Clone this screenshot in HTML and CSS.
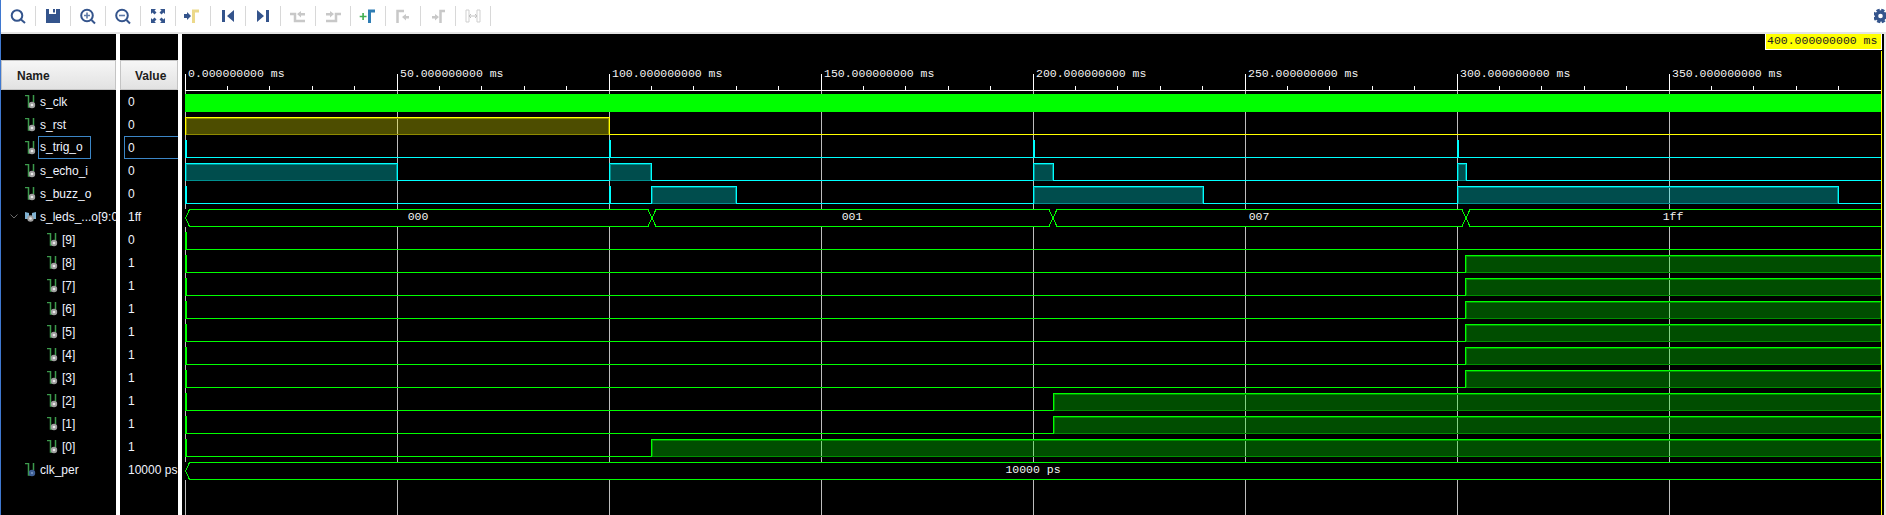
FILE: index.html
```html
<!DOCTYPE html>
<html lang="en">
<head>
<meta charset="utf-8">
<title>Waveform viewer</title>
<link rel="stylesheet" href="styles.css">
</head>
<body>
<svg class="defs" aria-hidden="true">
  <symbol id="sig" viewBox="0 0 11 14">
    <path class="sig-line" d="M0 .5H3.5V12H6M8.5 0V7"/>
    <circle class="sig-dot" cx="7" cy="10" r="3.2"/>
    <circle class="sig-core" cx="7" cy="10" r="1.3"/>
  </symbol>
  <symbol id="sig-param" viewBox="0 0 11 14">
    <path class="sig-line" d="M0 .5H3.5V12H6M8.5 0V7"/>
    <circle class="param-dot" cx="7" cy="10" r="3.2"/>
    <circle class="param-core" cx="7" cy="10" r="1"/>
  </symbol>
  <symbol id="sig-bus" viewBox="0 0 11 14">
    <path class="bus-shape" d="M0 2 4 3V9H0ZM11 2 7 3V9H11Z"/>
    <circle class="sig-dot" cx="5.5" cy="8.5" r="3.2"/>
    <circle class="sig-core" cx="5.5" cy="8.5" r="1.3"/>
  </symbol>
</svg>
<div class="app">
  <div class="toolbar">
    <div class="tool"><svg class="ico" viewBox="0 0 20 20"><circle class="s-blue" cx="9" cy="9.5" r="5.3"/><path class="s-blue" d="M13 13.5 17 17"/></svg></div>
    <div class="tool"><svg class="ico" viewBox="0 0 20 20"><path class="f-blue" d="M3 3H17V17H3Z"/><path class="f-white" d="M6 3H13V8H6Z"/><path class="f-blue" d="M10 3H12V6.500H10Z"/></svg></div>
    <div class="tool"><svg class="ico" viewBox="0 0 20 20"><circle class="s-blue" cx="9" cy="9.500" r="5.800"/><path class="s-blue" d="M13.500 14 17 17.500"/><path class="s-thin" d="M9 6.500V12.500M6 9.500H12"/></svg></div>
    <div class="tool"><svg class="ico" viewBox="0 0 20 20"><circle class="s-blue" cx="9" cy="9.500" r="5.800"/><path class="s-blue" d="M13.500 14 17 17.500"/><path class="s-thin" d="M6 9.500H12"/></svg></div>
    <div class="tool"><svg class="ico" viewBox="0 0 20 20"><path class="f-blue" d="M3 3H8L6.500 4.500 8.500 6.500 6.500 8.500 4.500 6.500 3 8ZM17 3V8L15.500 6.500 13.500 8.500 11.500 6.500 13.500 4.500 12 3ZM3 17V12L4.500 13.500 6.500 11.500 8.500 13.500 6.500 15.500 8 17ZM17 17H12L13.500 15.500 11.500 13.500 13.500 11.500 15.500 13.500 17 12Z"/></svg></div>
    <div class="tool"><svg class="ico" viewBox="0 0 20 20"><path class="f-blue" d="M1 8H4V6L8 10 4 14V12H1Z"/><path class="s-pale" d="M10.500 17V5H16"/></svg></div>
    <div class="tool"><svg class="ico" viewBox="0 0 20 20"><path class="f-blue" d="M4 4H7V16H4ZM16 4V16L9 10Z"/></svg></div>
    <div class="tool"><svg class="ico" viewBox="0 0 20 20"><path class="f-blue" d="M13 4H16V16H13ZM4 4V16L11 10Z"/></svg></div>
    <div class="tool"><svg class="ico" viewBox="0 0 20 20"><path class="s-off" d="M2 8H7V15H17"/><path class="f-off" d="M9 8 13 5V7H17V9.500H13V11.500Z"/></svg></div>
    <div class="tool"><svg class="ico" viewBox="0 0 20 20"><path class="s-off" d="M3 15H13V8H18"/><path class="f-off" d="M11 8 7 5V7H3V9.500H7V11.500Z"/></svg></div>
    <div class="tool"><svg class="ico" viewBox="0 0 20 20"><path class="f-green" d="M4.300 7H5.900V9.700H8.500V11.300H5.900V14H4.300V11.300H1.700V9.700H4.300Z"/><path class="s-marker" d="M11.500 17V5H17"/></svg></div>
    <div class="tool"><svg class="ico" viewBox="0 0 20 20"><path class="s-off" d="M4.500 17V5H11"/><path class="f-off" d="M9 11 13 8V10H16V12.500H13V14.500Z"/></svg></div>
    <div class="tool"><svg class="ico" viewBox="0 0 20 20"><path class="f-off" d="M11 11 7 8V10H4V12.500H7V14.500Z"/><path class="s-off" d="M12.500 17V5H17"/></svg></div>
    <div class="tool"><svg class="ico" viewBox="0 0 20 20"><path class="f-off-light" d="M3 4H6V16H3ZM14 4H17V16H14Z"/><path class="s-off-thin" d="M6 10H14M8 8 6 10 8 12M12 8 14 10 12 12"/></svg></div>
    <div class="gear"><svg class="gear-ico" viewBox="0 0 12 16"><circle class="gear-ring" cx="6.500" cy="8" r="4"/><circle class="gear-teeth" cx="6.500" cy="8" r="6.200"/></svg></div>
  </div>

  <div class="panes">
    <div class="col col-name">
      <div class="head head-name">Name</div>
      <div class="row"><svg class="sig"><use href="#sig"/></svg><span>s_clk</span></div>
      <div class="row"><svg class="sig"><use href="#sig"/></svg><span>s_rst</span></div>
      <div class="row"><svg class="sig"><use href="#sig"/></svg><span class="picked">s_trig_o</span></div>
      <div class="row"><svg class="sig"><use href="#sig"/></svg><span>s_echo_i</span></div>
      <div class="row"><svg class="sig"><use href="#sig"/></svg><span>s_buzz_o</span></div>
      <div class="row row-bus"><svg class="caret" viewBox="0 0 8 5"><path d="M.5 .5 4 4 7.500 .5"/></svg><svg class="sig"><use href="#sig-bus"/></svg><span>s_leds_...o[9:0]</span></div>
      <div class="row row-bit"><svg class="sig"><use href="#sig"/></svg><span>[9]</span></div>
      <div class="row row-bit"><svg class="sig"><use href="#sig"/></svg><span>[8]</span></div>
      <div class="row row-bit"><svg class="sig"><use href="#sig"/></svg><span>[7]</span></div>
      <div class="row row-bit"><svg class="sig"><use href="#sig"/></svg><span>[6]</span></div>
      <div class="row row-bit"><svg class="sig"><use href="#sig"/></svg><span>[5]</span></div>
      <div class="row row-bit"><svg class="sig"><use href="#sig"/></svg><span>[4]</span></div>
      <div class="row row-bit"><svg class="sig"><use href="#sig"/></svg><span>[3]</span></div>
      <div class="row row-bit"><svg class="sig"><use href="#sig"/></svg><span>[2]</span></div>
      <div class="row row-bit"><svg class="sig"><use href="#sig"/></svg><span>[1]</span></div>
      <div class="row row-bit"><svg class="sig"><use href="#sig"/></svg><span>[0]</span></div>
      <div class="row"><svg class="sig"><use href="#sig-param"/></svg><span>clk_per</span></div>
    </div>
    <div class="split"></div>
    <div class="col col-value">
      <div class="head head-value">Value</div>
      <div class="val">0</div>
      <div class="val">0</div>
      <div class="val val-picked">0</div>
      <div class="val">0</div>
      <div class="val">0</div>
      <div class="val">1ff</div>
      <div class="val">0</div>
      <div class="val">1</div>
      <div class="val">1</div>
      <div class="val">1</div>
      <div class="val">1</div>
      <div class="val">1</div>
      <div class="val">1</div>
      <div class="val">1</div>
      <div class="val">1</div>
      <div class="val">1</div>
      <div class="val">10000 ps</div>
    </div>
    <div class="split"></div>
    <svg class="wave" viewBox="182 34 1702 481">
      <path class="grid" d="M185.500 75V515M397.500 75V515M609.500 75V515M821.500 75V515M1033.500 75V515M1245.500 75V515M1457.500 75V515M1669.500 75V515"/>
      <path class="ruler" d="M185 90.500H1881M185.500 74V90M397.500 74V90M609.500 74V90M821.500 74V90M1033.500 74V90M1245.500 74V90M1457.500 74V90M1669.500 74V90"/>
      <path class="ruler" d="M227.500 86V90M269.500 86V90M312.500 86V90M354.500 86V90M439.500 86V90M481.500 86V90M524.500 86V90M566.500 86V90M651.500 86V90M693.500 86V90M736.500 86V90M778.500 86V90M863.500 86V90M905.500 86V90M948.500 86V90M990.500 86V90M1075.500 86V90M1117.500 86V90M1160.500 86V90M1202.500 86V90M1287.500 86V90M1329.500 86V90M1372.500 86V90M1414.500 86V90M1499.500 86V90M1541.500 86V90M1584.500 86V90M1626.500 86V90M1711.500 86V90M1753.500 86V90M1796.500 86V90M1838.500 86V90"/>
      <text class="tick" x="188" y="77">0.000000000 ms</text>
      <text class="tick" x="400" y="77">50.000000000 ms</text>
      <text class="tick" x="612" y="77">100.000000000 ms</text>
      <text class="tick" x="824" y="77">150.000000000 ms</text>
      <text class="tick" x="1036" y="77">200.000000000 ms</text>
      <text class="tick" x="1248" y="77">250.000000000 ms</text>
      <text class="tick" x="1460" y="77">300.000000000 ms</text>
      <text class="tick" x="1672" y="77">350.000000000 ms</text>

      <rect class="clk" x="185" y="94" width="1696" height="18"/>

      <path class="low y" d="M185 134.500H1881"/>
      <rect class="hi y" x="186.500" y="118.500" width="422" height="16"/>
      <path class="edge y" d="M185.500 135V117.500H609.500V135"/>

      <path class="low c" d="M185 157.500H1881M185 180.500H1881M185 203.500H1881"/>
      <path class="pulse c" d="M185 140h2v17h-2zM609 140h2v17h-2zM1033 140h2v17h-2zM1457 140h2v17h-2zM185 186h2v17h-2zM609 186h2v17h-2z"/>
      <rect class="hi c" x="186.500" y="164.500" width="210" height="16"/>
      <rect class="hi c" x="610.500" y="164.500" width="40" height="16"/>
      <rect class="hi c" x="1034.500" y="164.500" width="18" height="16"/>
      <rect class="hi c" x="1458.500" y="164.500" width="7" height="16"/>
      <rect class="hi c" x="652.500" y="187.500" width="83" height="16"/>
      <rect class="hi c" x="1034.500" y="187.500" width="168" height="16"/>
      <rect class="hi c" x="1458.500" y="187.500" width="379" height="16"/>
      <path class="edge c" d="M185.500 181V163.500H397.500V181M609.500 181V163.500H651.500V181M1033.500 181V163.500H1053.500V181M1457.500 181V163.500H1466.500V181M651.500 204V186.500H736.500V204M1033.500 204V186.500H1203.500V204M1457.500 204V186.500H1838.500V204"/>

      <rect class="bus-bg" x="185" y="209" width="1696" height="18"/>
      <path class="bus" d="M1881 209.500H1470L1462 226.500H1057L1049 209.500H656L648 226.500H189.500L185.500 218 189.500 209.500H648L656 226.500H1049L1057 209.500H1462L1470 226.500H1881"/>
      <text class="bus-val" x="418" y="220">000</text>
      <text class="bus-val" x="852" y="220">001</text>
      <text class="bus-val" x="1259" y="220">007</text>
      <text class="bus-val" x="1673" y="220">1ff</text>

      <path class="low g" d="M185 249.500H1881M185 272.500H1881M185 295.500H1881M185 318.500H1881M185 341.500H1881M185 364.500H1881M185 387.500H1881M185 410.500H1881M185 433.500H1881M185 456.500H1881"/>
      <path class="pulse g" d="M185 232h2v17h-2zM185 255h2v17h-2zM185 278h2v17h-2zM185 301h2v17h-2zM185 324h2v17h-2zM185 347h2v17h-2zM185 370h2v17h-2zM185 393h2v17h-2zM185 416h2v17h-2zM185 439h2v17h-2z"/>
      <rect class="hi g" x="1466.500" y="256.500" width="414" height="16"/>
      <rect class="hi g" x="1466.500" y="279.500" width="414" height="16"/>
      <rect class="hi g" x="1466.500" y="302.500" width="414" height="16"/>
      <rect class="hi g" x="1466.500" y="325.500" width="414" height="16"/>
      <rect class="hi g" x="1466.500" y="348.500" width="414" height="16"/>
      <rect class="hi g" x="1466.500" y="371.500" width="414" height="16"/>
      <rect class="hi g" x="1054.500" y="394.500" width="826" height="16"/>
      <rect class="hi g" x="1054.500" y="417.500" width="826" height="16"/>
      <rect class="hi g" x="652.500" y="440.500" width="1228" height="16"/>
      <path class="edge g" d="M1465.500 273V255.500H1881M1465.500 296V278.500H1881M1465.500 319V301.500H1881M1465.500 342V324.500H1881M1465.500 365V347.500H1881M1465.500 388V370.500H1881M1053.500 411V393.500H1881M1053.500 434V416.500H1881M651.500 457V439.500H1881"/>

      <rect class="bus-bg" x="185" y="462" width="1696" height="18"/>
      <path class="bus" d="M1881 462.500H189.500L185.500 471 189.500 479.500H1881"/>
      <text class="bus-val" x="1033" y="473">10000 ps</text>

      <path class="cursor" d="M1881.500 51V515"/>
      <rect class="cursor-box" x="1765.500" y="33" width="116" height="16"/>
      <text class="cursor-label" x="1767" y="44">400.000000000 ms</text>
    </svg>
    <div class="edge-strip"></div>
  </div>
</div>
</body>
</html>
```

FILE: styles.css
```css
* { box-sizing: border-box; }
html, body { margin: 0; padding: 0; background: #000; }
.defs { display: none; }
.app {
  width: 1886px;
  height: 515px;
  display: flex;
  flex-direction: column;
  overflow: hidden;
  border-left: 1px solid #3f78d0;
  font-family: "Liberation Sans", Arial, sans-serif;
  font-size: 12px;
}
.toolbar {
  height: 34px;
  flex: none;
  display: flex;
  align-items: center;
  background: #fff;
  border-bottom: 2px solid #e4e4e4;
}
.tool {
  width: 35px;
  height: 20px;
  flex: none;
  display: flex;
  align-items: center;
  justify-content: center;
  padding-right: 1px;
  border-right: 1px solid #d8d8d8;
}
.ico { width: 20px; height: 20px; flex: none; fill: none; }
.s-blue { fill: none; stroke: #34548c; stroke-width: 2; }
.s-thin { fill: none; stroke: #5f7ba8; stroke-width: 1.6; }
.f-blue { fill: #34548c; }
.f-white { fill: #fff; }
.f-green { fill: #3fae4f; }
.s-pale { fill: none; stroke: #ecd98a; stroke-width: 3; }
.s-marker { fill: none; stroke: #2f7db4; stroke-width: 3; }
.s-off { fill: none; stroke: #c8c8c8; stroke-width: 2.500; }
.f-off { fill: #c8c8c8; }
.f-off-light { fill: #fff; stroke: #cfcfcf; stroke-width: 1; }
.s-off-thin { fill: none; stroke: #c0c0c0; stroke-width: 1; }
.gear { margin-left: auto; height: 16px; display: flex; }
.gear-ico { width: 12px; height: 16px; fill: none; }
.gear-ring { fill: none; stroke: #34548c; stroke-width: 3.400; }
.gear-teeth { fill: none; stroke: #34548c; stroke-width: 2.200; stroke-dasharray: 3.300 1.570; }

.panes { flex: 1; display: flex; min-height: 0; background: #000; }
.col { flex: none; padding-top: 26px; overflow: hidden; color: #f0f4ff; }
.col-name { width: 115px; }
.col-value { width: 58px; }
.split { width: 4px; flex: none; background: #fff; }
.head {
  height: 30px;
  display: flex;
  align-items: center;
  padding-top: 1px;
  font-weight: bold;
  color: #1c1c1c;
  background: linear-gradient(#f6f6f6, #e2e2e2);
  border: 1px solid #c4c4c4;
}
.head-name { padding-left: 15px; }
.head-value { padding-left: 14px; }
.row, .val {
  height: 23px;
  display: flex;
  align-items: center;
  white-space: nowrap;
}
.row { padding-left: 24px; }
.row-bus { padding-left: 9px; }
.row-bit { padding-left: 46px; }
.sig { width: 11px; height: 14px; flex: none; margin-right: 4px; }
.caret { width: 8px; height: 5px; flex: none; margin-right: 7px; fill: none; stroke: #6a6a6a; stroke-width: 1; }
.sig-line { fill: none; stroke: #3c9a4c; stroke-width: 1.500; }
.sig-dot { fill: #a0a0a0; }
.sig-core { fill: #e8e8e8; }
.param-dot { fill: #3f5f96; }
.param-core { fill: #7f9cc8; }
.bus-shape { fill: #7fb2d2; }
.picked {
  margin-left: -2px;
  padding: 0 7px 0 1px;
  height: 23px;
  line-height: 21px;
  border: 1px solid #3c86c6;
}
.val { padding-left: 8px; }
.val-picked {
  margin-left: 4px;
  padding-left: 3px;
  border: 1px solid #3c86c6;
  border-right: none;
}

.wave {
  flex: 1;
  min-width: 0;
  height: 481px;
  display: block;
  shape-rendering: crispEdges;
}
.edge-strip { width: 2px; flex: none; background: #e8e8e8; }
.grid { fill: none; stroke: #bdbdbd; stroke-width: 1; }
.ruler { fill: none; stroke: #fff; stroke-width: 1; }
.tick, .bus-val, .cursor-label {
  font-family: "Liberation Mono", "Courier New", monospace;
  font-size: 11.500px;
}
.tick { fill: #f4f4f4; }
.bus-val { fill: #f4f4f4; text-anchor: middle; }
.clk { fill: #0f0; }
.low, .edge, .bus { fill: none; stroke-width: 1; }
.low.y, .edge.y { stroke: #ff0; }
.low.c, .edge.c { stroke: #0ff; }
.low.g, .edge.g, .bus { stroke: #0f0; }
.pulse.c { fill: #0ff; }
.pulse.g { fill: #0f0; }
.hi { stroke-width: 1; }
.hi.y { fill: rgba(255, 255, 0, .3); stroke: #8f8a00; }
.hi.c { fill: rgba(0, 255, 255, .3); stroke: #009090; }
.hi.g { fill: rgba(0, 255, 0, .3); stroke: #009000; }
.bus-bg { fill: #000; }
.cursor { fill: none; stroke: #ff0; stroke-width: 1; }
.cursor-box { fill: #ff0; stroke: #fff; stroke-width: 1; }
.cursor-label { fill: #222; }
```
